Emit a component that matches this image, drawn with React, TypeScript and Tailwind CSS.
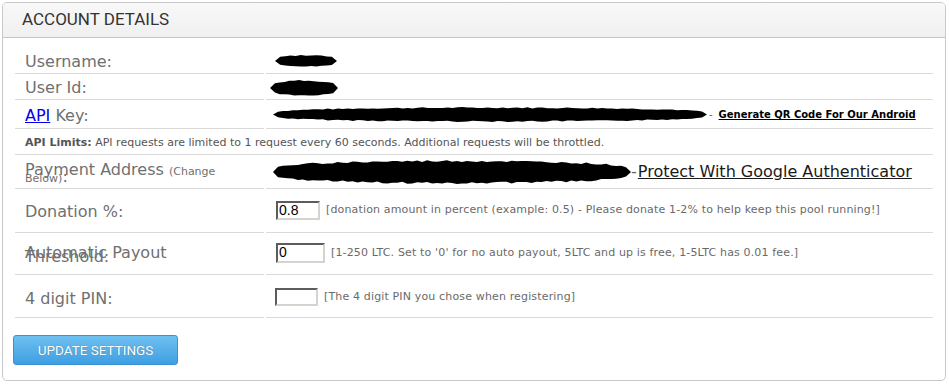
import React from "react";

const Scribble = ({ w, h, seed }: { w: number; h: number; seed: number }) => {
  let s = seed;
  const rnd = () => {
    s = (s * 9301 + 49297) % 233280;
    return s / 233280;
  };
  const n = Math.max(10, Math.round(w / 5));
  const top: string[] = [];
  const bottom: string[] = [];
  for (let i = 0; i <= n; i++) {
    const x = (i / n) * w;
    const t = Math.pow(Math.sin((Math.PI * i) / n), 0.25);
    top.push(`${x.toFixed(1)},${(h / 2 - (h / 2) * t * (0.82 + 0.18 * rnd())).toFixed(1)}`);
    bottom.push(`${x.toFixed(1)},${(h / 2 + (h / 2) * t * (0.82 + 0.18 * rnd())).toFixed(1)}`);
  }
  const d = `M${top.join(" L")} L${bottom.reverse().join(" L")} Z`;
  return (
    <svg width={w} height={h} className="block shrink-0">
      <path d={d} fill="#000" />
    </svg>
  );
};

const Row = ({ h, children }: { h: string; children: React.ReactNode }) => <div className={`flex gap-[2px] ${h}`}>{children}</div>;

const Label = ({ pt, children }: { pt: string; children: React.ReactNode }) => (
  <div className={`w-[249px] shrink-0 border-b border-[#dadada] pl-[10px] text-[16px] leading-[20px] text-[#707070] ${pt}`}>{children}</div>
);

const Value = ({ pt, pl, children }: { pt: string; pl: string; children: React.ReactNode }) => (
  <div className={`flex-1 border-b border-[#dadada] ${pt} ${pl}`}>{children}</div>
);

const Field = ({ value, w, h }: { value: string; w: string; h: string }) => (
  <div
    className={`${w} ${h} shrink-0 border-2 border-t-[#5c5c5c] border-l-[#5c5c5c] border-r-[#d6d3ce] border-b-[#d6d3ce] bg-white pl-[1px] font-['Liberation_Sans'] text-[14px] leading-[14px] text-black`}
  >
    {value}
  </div>
);

const Hint = ({ children }: { children: React.ReactNode }) => <span className="ml-[6px] text-[11px] tracking-[0.15px] text-[#6a6a6a]">{children}</span>;

export default function App() {
  return (
    <div className="w-[949px] h-[386px] bg-white p-[2px] font-['DejaVu_Sans',sans-serif]">
      <div className="w-[944px] h-[379px] rounded-[5px] border border-[#c9c9c9] overflow-hidden">
        <div className="h-[35px] border-b border-[#c2c7cc] bg-gradient-to-b from-[#f8f8f8] to-[#f0f0f0] pl-[19px] flex items-center font-['Roboto',sans-serif] text-[17px] text-[#333]">
          ACCOUNT DETAILS
        </div>

        <div className="px-[12px] pt-[9px]">
          <Row h="h-[27px]">
            <Label pt="pt-[5px]">Username:</Label>
            <Value pt="pt-[8px]" pl="pl-[9px]">
              <Scribble w={62} h={12} seed={3} />
            </Value>
          </Row>
          <Row h="h-[26px]">
            <Label pt="pt-[4px]">User Id:</Label>
            <Value pt="pt-[6px]" pl="pl-[4px]">
              <Scribble w={68} h={16} seed={11} />
            </Value>
          </Row>
          <Row h="h-[29px]">
            <Label pt="pt-[6px]">
              <span className="text-[#0000ee] underline">API</span> Key:
            </Label>
            <Value pt="pt-[7px]" pl="pl-[7px]">
              <div className="flex items-center">
                <Scribble w={434} h={15} seed={7} />
                <span className="ml-[2px] text-[10px] text-[#666]">-</span>
                <span className="ml-[6px] text-[10px] font-bold text-black underline">Generate QR Code For Our Android</span>
              </div>
            </Value>
          </Row>
          <div className="h-[26px] border-b border-[#dadada] pl-[10px] pt-[8px] text-[11px] leading-[12px] text-[#555]">
            <span className="font-bold">API Limits:</span> API requests are limited to 1 request every 60 seconds. Additional requests will be throttled.
          </div>
          <Row h="h-[34px]">
            <Label pt="pt-[12px] !leading-[5px]">
              Payment Address <span className="text-[11px]">(Change</span>
              <br />
              <span className="text-[11px]">Below)</span>:
            </Label>
            <Value pt="pt-[5px]" pl="pl-[7px]">
              <div className="flex items-center">
                <Scribble w={358} h={24} seed={19} />
                <span className="text-[16px] text-[#666]">-</span>
                <span className="ml-[1px] text-[16px] text-[#1a1a1a] underline">Protect With Google Authenticator</span>
              </div>
            </Value>
          </Row>
          <Row h="h-[44px]">
            <Label pt="pt-[13px]">Donation %:</Label>
            <Value pt="pt-[12px]" pl="pl-[10px]">
              <div className="flex items-center">
                <Field value="0.8" w="w-[44px]" h="h-[19px]" />
                <Hint>[donation amount in percent (example: 0.5) - Please donate 1-2% to help keep this pool running!]</Hint>
              </div>
            </Value>
          </Row>
          <Row h="h-[42px]">
            <Label pt="pt-[18px] !leading-[4px]">
              Automatic Payout
              <br />
              Threshold:
            </Label>
            <Value pt="pt-[10px]" pl="pl-[10px]">
              <div className="flex items-center">
                <Field value="0" w="w-[49px]" h="h-[20px]" />
                <Hint>[1-250 LTC. Set to '0' for no auto payout, 5LTC and up is free, 1-5LTC has 0.01 fee.]</Hint>
              </div>
            </Value>
          </Row>
          <Row h="h-[43px]">
            <Label pt="pt-[14px]">4 digit PIN:</Label>
            <Value pt="pt-[13px]" pl="pl-[9px]">
              <div className="flex items-center">
                <Field value="" w="w-[43px]" h="h-[18px]" />
                <Hint>[The 4 digit PIN you chose when registering]</Hint>
              </div>
            </Value>
          </Row>
        </div>

        <div className="pl-[10px] pt-[17px]">
          <button className="w-[165px] h-[30px] rounded-[3px] border border-[#3d92d6] bg-gradient-to-b from-[#6ec0f1] to-[#3d9fe2] font-['Roboto',sans-serif] text-[13.5px] text-white [text-shadow:0_0_1px_rgba(0,0,0,0.35)]">
            UPDATE SETTINGS
          </button>
        </div>
      </div>
    </div>
  );
}
